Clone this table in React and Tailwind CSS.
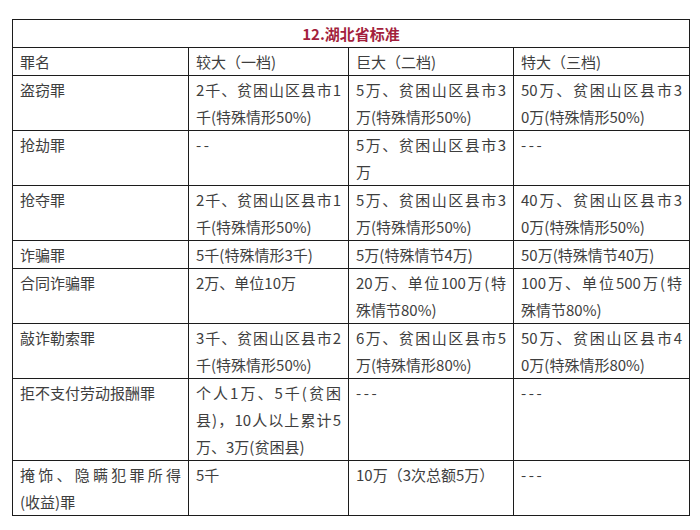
import React from 'react';

// 每个单元格按行拆好，非末行两端对齐（模拟原表的 justify 折行）
const rows = [
  { name: ['盗窃罪'], c1: ['2千、贫困山区县市1', '千(特殊情形50%)'], c2: ['5万、贫困山区县市3', '万(特殊情形50%)'], c3: ['50万、贫困山区县市3', '0万(特殊情形50%)'] },
  { name: ['抢劫罪'], c1: ['--'], c2: ['5万、贫困山区县市3', '万'], c3: ['---'] },
  { name: ['抢夺罪'], c1: ['2千、贫困山区县市1', '千(特殊情形50%)'], c2: ['5万、贫困山区县市3', '万(特殊情形50%)'], c3: ['40万、贫困山区县市3', '0万(特殊情形50%)'] },
  { name: ['诈骗罪'], c1: ['5千(特殊情形3千)'], c2: ['5万(特殊情节4万)'], c3: ['50万(特殊情节40万)'] },
  { name: ['合同诈骗罪'], c1: ['2万、单位10万'], c2: ['20万、单位100万(特', '殊情节80%)'], c3: ['100万、单位500万(特', '殊情节80%)'] },
  { name: ['敲诈勒索罪'], c1: ['3千、贫困山区县市2', '千(特殊情形50%)'], c2: ['6万、贫困山区县市5', '万(特殊情形80%)'], c3: ['50万、贫困山区县市4', '0万(特殊情形80%)'] },
  { name: ['拒不支付劳动报酬罪'], c1: ['个人1万、5千(贫困', '县)，10人以上累计5', '万、3万(贫困县)'], c2: ['---'], c3: ['---'] },
  { name: ['掩饰、隐瞒犯罪所得', '(收益)罪'], c1: ['5千'], c2: ['10万（3次总额5万）'], c3: ['---'] },
];

function Cell({ lines }) {
  return (
    <td className="border border-[#1c1c1c] px-[7px] py-0 align-top">
      {lines.map((line, i) => {
        const isDash = /^-+$/.test(line);
        let cls = i < lines.length - 1 ? 'text-justify [text-align-last:justify]' : 'text-left';
        if (isDash) cls += ' tracking-[2.5px]';
        return (
          <div key={i} className={cls}>
            {line}
          </div>
        );
      })}
    </td>
  );
}

export default function App() {
  return (
    <div className="min-h-[530px] w-[700px] bg-white pl-[12px] pt-[19px]">
      <table
        className="w-[677px] table-fixed border-collapse text-[15px] leading-[27px] text-[#3e3e3e]"
        style={{ fontFamily: '"Microsoft YaHei", "Noto Sans CJK SC", "Noto Sans", sans-serif' }}
      >
        <colgroup>
          <col className="w-[176px]" />
          <col className="w-[160px]" />
          <col className="w-[165px]" />
          <col className="w-[176px]" />
        </colgroup>
        <tbody>
          <tr>
            <td colSpan={4} className="border border-[#1c1c1c] py-0 text-center font-bold text-[#a31f3d]">
              12.湖北省标准
            </td>
          </tr>
          <tr>
            <Cell lines={['罪名']} />
            <Cell lines={['较大（一档)']} />
            <Cell lines={['巨大（二档)']} />
            <Cell lines={['特大（三档)']} />
          </tr>
          {rows.map((r, i) => (
            <tr key={i}>
              <Cell lines={r.name} />
              <Cell lines={r.c1} />
              <Cell lines={r.c2} />
              <Cell lines={r.c3} />
            </tr>
          ))}
        </tbody>
      </table>
    </div>
  );
}
